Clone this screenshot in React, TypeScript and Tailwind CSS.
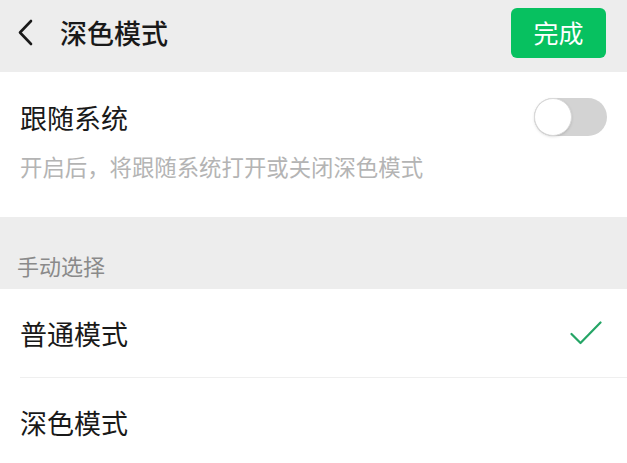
const font = { fontFamily: '"Noto Sans CJK SC", "Noto Sans", sans-serif' }

function Toggle() {
  return (
    <div className="relative w-[73px] h-[38px] rounded-full bg-[#d3d3d3]">
      <div className="absolute left-0 top-0 w-[38px] h-[38px] rounded-full bg-white border border-[#d9d9d9] shadow-sm" />
    </div>
  )
}

function Check() {
  return (
    <svg width="32" height="24" viewBox="0 0 32 24" fill="none">
      <path d="M1.5 13 L10.5 22 L30.5 1.5" stroke="#25a566" strokeWidth="2.2" strokeLinecap="round" strokeLinejoin="round" />
    </svg>
  )
}

export default function App() {
  return (
    <div className="w-[627px] h-[463px] overflow-hidden bg-[#ededed] text-[#191919]" style={font}>
      {/* Header */}
      <div className="h-[72px] flex items-center pl-[17px] pr-[21px] pb-[7px]">
        <svg width="16" height="27" viewBox="0 0 16 27" fill="none">
          <path d="M14 2 L3 13.5 L14 25" stroke="#1a1a1a" strokeWidth="2.6" strokeLinecap="round" strokeLinejoin="round" />
        </svg>
        <span className="ml-[27px] text-[27px] leading-none font-medium">深色模式</span>
        <button className="ml-auto w-[95px] h-[50px] rounded-[6px] bg-[#07c160] text-white text-[25px] leading-none">
          完成
        </button>
      </div>

      {/* Follow system */}
      <div className="h-[145px] bg-white px-5 pt-[25px]">
        <div className="h-10 flex items-center justify-between">
          <span className="text-[27px] leading-none">跟随系统</span>
          <Toggle />
        </div>
        <p className="mt-[14px] text-[22.4px] leading-[30px] text-[#b4b4b4]">开启后，将跟随系统打开或关闭深色模式</p>
      </div>

      {/* Manual */}
      <div className="h-[72px] flex items-end px-[17px] pb-[10px]">
        <span className="text-[22px] leading-[28px] text-[#8a8a8a]">手动选择</span>
      </div>

      <div className="bg-white">
        <div className="ml-5 h-[89px] flex items-center justify-between pr-[25px] border-b border-[#efefef]">
          <span className="text-[27px] leading-none">普通模式</span>
          <Check />
        </div>
        <div className="ml-5 h-[89px] flex items-center">
          <span className="text-[27px] leading-none">深色模式</span>
        </div>
      </div>
    </div>
  )
}
